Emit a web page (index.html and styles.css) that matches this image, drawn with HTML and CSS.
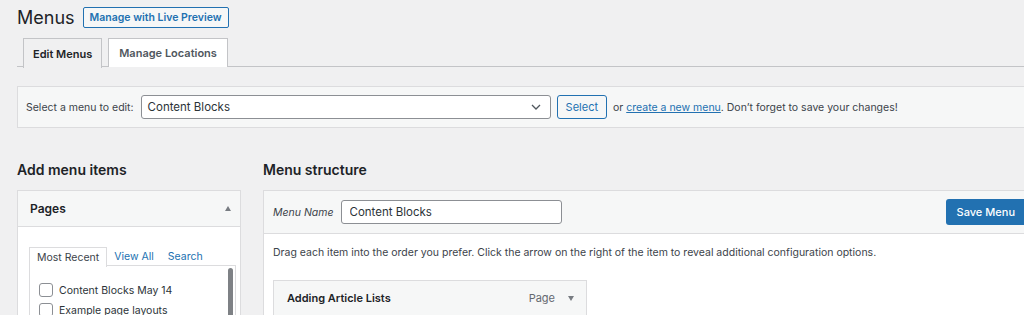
FILE: index.html
```html
<!DOCTYPE html>
<html lang="en">
<head>
    <meta charset="UTF-8">
    <title>Menus</title>
    <link rel="stylesheet" href="styles.css">
</head>
<body>
    <div class="wrap">
        <div class="title-row">
            <h1>Menus</h1>
            <a class="btn-outline" href="#">Manage with Live Preview</a>
        </div>
        <nav class="tabs">
            <a class="tab active" href="#">Edit Menus</a>
            <a class="tab" href="#">Manage Locations</a>
        </nav>
        <div class="manage-menus">
            <label for="menu">Select a menu to edit:</label>
            <div class="select">
                <span>Content Blocks</span>
                <svg width="10" height="6" viewBox="0 0 10 6"><path d="M1 1l4 4 4-4" fill="none" stroke="#50575e" stroke-width="1.3"/></svg>
            </div>
            <a class="btn-secondary" href="#">Select</a>
            <span class="hint">or <a href="#">create a new menu</a>. Don’t forget to save your changes!</span>
        </div>
        <div class="columns">
            <div class="side">
                <h2>Add menu items</h2>
                <div class="box">
                    <div class="box-head">
                        <span>Pages</span>
                        <span class="caret-up"></span>
                    </div>
                    <div class="box-body">
                        <ul class="subtabs">
                            <li class="current">Most Recent</li>
                            <li><a href="#">View All</a></li>
                            <li><a href="#">Search</a></li>
                        </ul>
                        <div class="list">
                            <label class="check"><input type="checkbox"> Content Blocks May 14</label>
                            <label class="check"><input type="checkbox"> Example page layouts</label>
                            <div class="scrollbar"></div>
                        </div>
                    </div>
                </div>
            </div>
            <div class="main">
                <h2>Menu structure</h2>
                <div class="menu-edit">
                    <div class="menu-head">
                        <label class="name-label">Menu Name</label>
                        <input class="name-input" type="text" value="Content Blocks">
                        <a class="btn-primary" href="#">Save Menu</a>
                    </div>
                    <div class="menu-body">
                        <p class="drag-hint">Drag each item into the order you prefer. Click the arrow on the right of the item to reveal additional configuration options.</p>
                        <div class="item">
                            <span class="item-title">Adding Article Lists</span>
                            <span class="item-type">Page</span>
                            <span class="caret-down"></span>
                        </div>
                    </div>
                </div>
            </div>
        </div>
    </div>
</body>
</html>
```

FILE: styles.css
```css
body {
    margin: 0;
    background-color: #f0f0f1;
    color: #3c434a;
    font-family: Inter, "Noto Sans", sans-serif;
    font-size: 11px;
    overflow: hidden;
    height: 315px;
}
a {
    color: #2271b1;
    text-decoration: none;
}
.wrap {
    margin-left: 17px;
    width: 1020px;
    padding-top: 7px;
}
.title-row {
    display: flex;
    align-items: center;
    gap: 8px;
    height: 21px;
}
h1 {
    margin: 0;
    font-size: 18px;
    font-weight: 400;
    color: #1d2327;
    line-height: 21px;
}
.btn-outline {
    display: flex;
    align-items: center;
    height: 19px;
    padding: 0 6px;
    border: 1px solid #2271b1;
    border-radius: 2px;
    background-color: #f6f7f7;
    font-weight: 600;
    font-size: 10.5px;
}
.tabs {
    display: flex;
    gap: 6px;
    margin-top: 10px;
    padding-left: 6px;
    border-bottom: 1px solid #c3c4c7;
    height: 28px;
}
.tab {
    display: flex;
    align-items: center;
    padding: 0 9px;
    height: 28px;
    border: 1px solid #c3c4c7;
    border-bottom: none;
    background-color: #fff;
    color: #50575e;
    font-weight: 600;
    font-size: 11px;
}
.tab:last-child {
    padding: 0 10px;
}
.tab.active {
    background-color: #f0f0f1;
    color: #1d2327;
    height: 29px;
}
.manage-menus {
    display: flex;
    align-items: center;
    margin-top: 19px;
    height: 40px;
    padding-left: 8px;
    border: 1px solid #dcdcde;
    background-color: #f6f7f7;
}
.manage-menus label {
    margin-right: 7px;
    color: #3c434a;
    font-size: 10.5px;
}
.select {
    display: flex;
    align-items: center;
    justify-content: space-between;
    box-sizing: border-box;
    width: 410px;
    height: 24px;
    padding: 0 9px 0 6px;
    border: 1px solid #8c8f94;
    border-radius: 3px;
    background-color: #fff;
    color: #2c3338;
    font-size: 11.5px;
}
.btn-secondary {
    display: flex;
    align-items: center;
    box-sizing: border-box;
    height: 24px;
    margin-left: 6px;
    padding: 0 8px;
    border: 1px solid #2271b1;
    border-radius: 3px;
    background-color: #f6f7f7;
    font-size: 11px;
}
.hint {
    margin-left: 6px;
    font-size: 10.5px;
}
.hint a {
    text-decoration: underline;
}
.columns {
    display: flex;
    gap: 22px;
}
.side {
    width: 224px;
    flex-shrink: 0;
}
.main {
    flex: 1;
}
h2 {
    margin: 32px 0 10px;
    font-size: 14px;
    font-weight: 600;
    line-height: 20px;
    color: #1d2327;
}
.box {
    border: 1px solid #dcdcde;
    background-color: #fff;
    height: 200px;
}
.box-head {
    display: flex;
    align-items: center;
    justify-content: space-between;
    height: 35px;
    padding: 0 9px 0 12px;
    border-bottom: 1px solid #dcdcde;
    background-color: #f6f7f7;
    color: #1d2327;
    font-weight: 600;
    font-size: 12px;
}
.caret-up {
    width: 0;
    height: 0;
    border-left: 3.5px solid transparent;
    border-right: 3.5px solid transparent;
    border-bottom: 5px solid #787c82;
}
.box-body {
    padding: 20px 4px 0 11px;
}
.subtabs {
    display: flex;
    list-style: none;
    margin: 0;
    padding: 0;
    height: 19px;
    font-size: 10.5px;
}
.subtabs li {
    display: flex;
    align-items: center;
    padding: 0 7px;
}
.subtabs li.current {
    border: 1px solid #dcdcde;
    border-bottom: none;
    background-color: #fff;
    color: #3c434a;
    height: 19px;
    position: relative;
    z-index: 1;
}
.list {
    position: relative;
    border: 1px solid #dcdcde;
    margin-top: -1px;
    padding: 14px 10px 0 9px;
    height: 80px;
}
.check {
    display: flex;
    align-items: center;
    gap: 6px;
    height: 20px;
    color: #2c3338;
    font-size: 10.5px;
}
.check input {
    appearance: none;
    margin: 0;
    width: 14px;
    height: 14px;
    border: 1px solid #8c8f94;
    border-radius: 3px;
    background-color: #fff;
}
.scrollbar {
    position: absolute;
    top: 2px;
    right: 2px;
    width: 5px;
    height: 90px;
    border-radius: 3px;
    background-color: #7e8185;
}
.menu-edit {
    border: 1px solid #dcdcde;
    background-color: #fff;
    height: 200px;
}
.menu-head {
    display: flex;
    align-items: center;
    height: 42px;
    padding: 0 10px 0 9px;
    border-bottom: 1px solid #dcdcde;
    background-color: #f6f7f7;
}
.name-label {
    font-style: italic;
    color: #3c434a;
    margin-right: 7px;
    font-size: 10.5px;
}
.name-input {
    box-sizing: border-box;
    width: 221px;
    height: 24px;
    padding: 0 8px;
    border: 1px solid #8c8f94;
    border-radius: 3px;
    font-family: inherit;
    font-size: 11.5px;
    color: #2c3338;
}
.btn-primary {
    display: flex;
    align-items: center;
    margin-left: auto;
    height: 26px;
    padding: 0 11px;
    border-radius: 3px;
    background-color: #2271b1;
    color: #fff;
    font-size: 11px;
    font-weight: 500;
}
.menu-body {
    padding: 0 9px;
}
.drag-hint {
    margin: 12px 0 0;
    line-height: 14px;
    font-size: 10.5px;
}
.item {
    display: flex;
    align-items: center;
    box-sizing: border-box;
    width: 314px;
    height: 36px;
    margin-top: 20px;
    padding: 0 12px 0 13px;
    border: 1px solid #dcdcde;
    background-color: #f6f7f7;
}
.item-title {
    flex: 1;
    font-weight: 600;
    color: #1d2327;
    font-size: 11px;
}
.item-type {
    color: #646970;
    margin-right: 13px;
    font-size: 11px;
}
.caret-down {
    width: 0;
    height: 0;
    border-left: 3.5px solid transparent;
    border-right: 3.5px solid transparent;
    border-top: 5px solid #787c82;
}
```
